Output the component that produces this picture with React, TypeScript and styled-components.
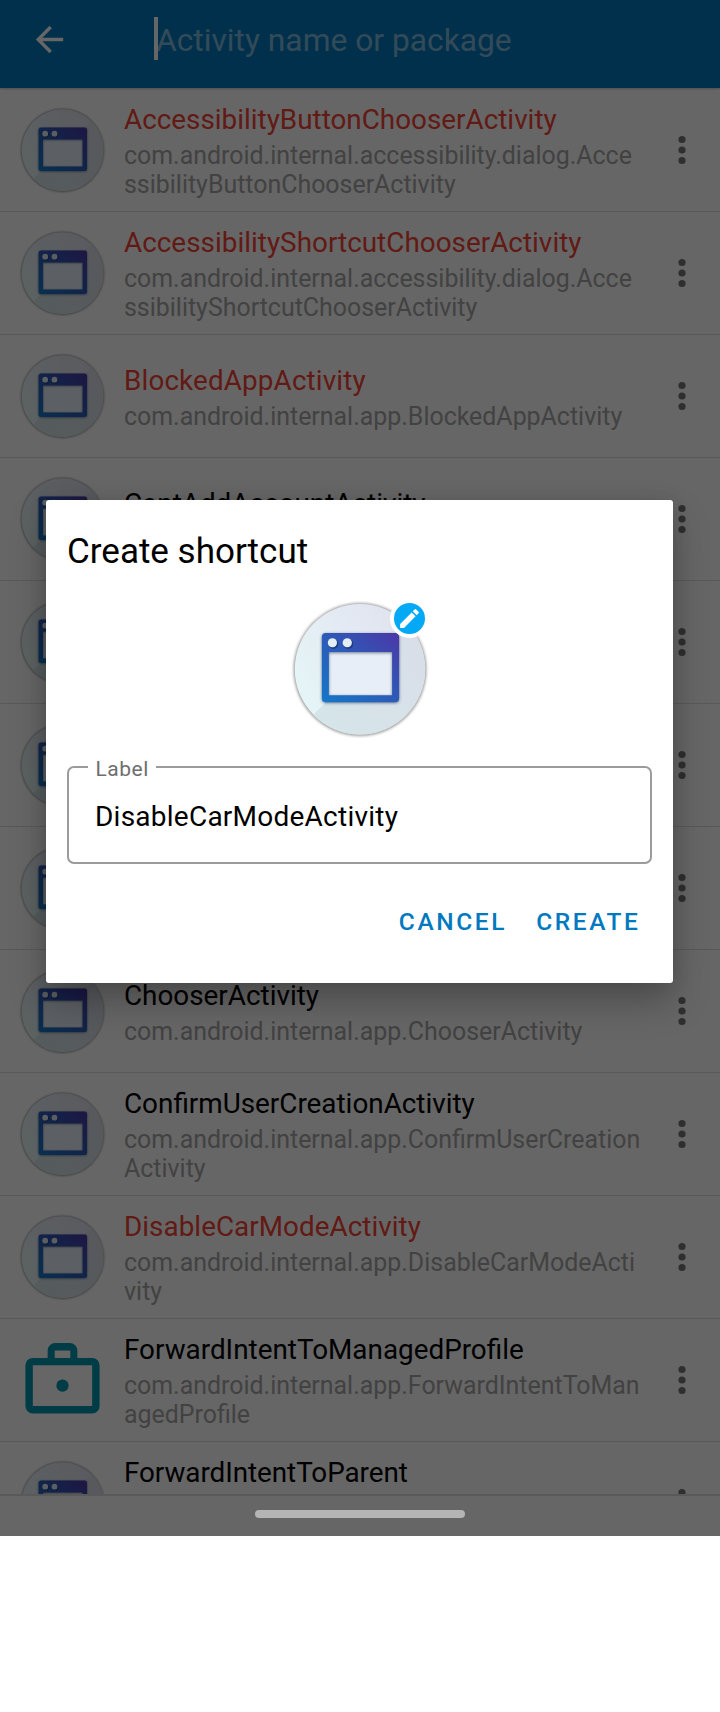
import React, { useId } from "react";
import styled, { createGlobalStyle } from "styled-components";

const GlobalStyle = createGlobalStyle`
  *, *::before, *::after { box-sizing: border-box; }
  body { margin: 0; background: #fff; font-family: Roboto, sans-serif; }
`;

const Screen = styled.div`
  position: relative;
  width: 720px;
  height: 1536px;
  display: flex;
  flex-direction: column;
  overflow: hidden;
  background: #fff;
`;

const SearchBar = styled.header`
  flex: none;
  height: 88px;
  padding: 0 29px 10px;
  display: flex;
  align-items: center;
  background: #0079bc;
  box-shadow: 0 1px 2px rgba(0, 0, 0, 0.25);
  z-index: 1;
`;

const BackIcon = styled.svg`
  flex: none;
  width: 41px;
  height: 41px;
  margin-right: 84px;
  fill: #fff;
`;

const Cursor = styled.span`
  flex: none;
  width: 4px;
  height: 43px;
  margin-right: -2px;
  margin-bottom: 1px;
  background: #fff;
`;

const Hint = styled.span`
  padding-top: 3px;
  font-size: 31.75px;
  line-height: 38px;
  color: rgba(255, 255, 255, 0.5);
  white-space: nowrap;
`;

const List = styled.ul`
  flex: 1;
  min-height: 0;
  margin: 0;
  padding: 1px 0 0;
  overflow: hidden;
  list-style: none;
`;

const Row = styled.li`
  display: flex;
  align-items: center;
  height: 123px;
  padding-left: 17.5px;
  border-bottom: 1px solid #dfdfdf;
`;

const RowText = styled.div`
  width: 520px;
  margin-left: 17.5px;
  padding-top: 2px;
`;

const Name = styled.div<{ $alert?: boolean; $tracking?: number }>`
  font-size: 27.85px;
  line-height: 33px;
  letter-spacing: ${(p) => (p.$tracking ? `${p.$tracking}px` : "normal")};
  white-space: nowrap;
  color: ${(p) => (p.$alert ? "#f44336" : "#000")};
`;

const Path = styled.div`
  margin-top: 5px;
  font-size: 24.93px;
  line-height: 29px;
  word-break: break-all;
  color: #a6a6a6;
`;

const MoreIcon = styled.svg`
  flex: none;
  width: 42px;
  height: 42px;
  margin-left: 17px;
  fill: #757575;
`;

const NavBar = styled.footer`
  flex: none;
  display: flex;
  justify-content: center;
  height: 42px;
  padding-top: 14px;
  border-top: 2px solid #dfdfdf;
  background: #fff;
`;

const HomePill = styled.span`
  position: relative;
  z-index: 3;
  width: 210px;
  height: 8px;
  border-radius: 4px;
  background: #b4b4b4;
`;

const Scrim = styled.div`
  position: absolute;
  inset: 0;
  z-index: 2;
  background: rgba(0, 0, 0, 0.6);
`;

const Dialog = styled.section`
  position: absolute;
  left: 46px;
  top: 500px;
  width: 627px;
  height: 483px;
  padding: 31px 21px 0;
  display: flex;
  flex-direction: column;
  border-radius: 3px;
  background: #fff;
  box-shadow: 0 18px 36px rgba(0, 0, 0, 0.26), 0 0 20px rgba(0, 0, 0, 0.08);
`;

const DialogTitle = styled.h1`
  margin: 0;
  font-size: 35px;
  font-weight: 400;
  line-height: 42px;
  color: #000;
`;

const IconPicker = styled.div`
  position: relative;
  align-self: center;
  height: 142px;
  margin-top: 25px;
`;

const EditBadge = styled.span`
  position: absolute;
  left: 101.5px;
  top: 0.5px;
  width: 39px;
  height: 39px;
  display: flex;
  align-items: center;
  justify-content: center;
  border: 4px solid #fff;
  border-radius: 50%;
  background: #03a9f4;
`;

const Field = styled.fieldset`
  height: 110px;
  margin: 14px 0 0;
  padding: 0 26px;
  border: 2px solid #9b9b9b;
  border-radius: 7px;
`;

const FieldLabel = styled.legend`
  margin-left: -7px;
  padding: 4px 7px 0 7.5px;
  font-size: 21px;
  line-height: 22px;
  letter-spacing: 0.5px;
  color: #6e6e6e;
`;

const FieldValue = styled.div`
  padding-top: 20px;
  font-size: 28px;
  line-height: 34px;
  letter-spacing: 0.24px;
  color: #000;
`;

const Actions = styled.div`
  display: flex;
  justify-content: flex-end;
  gap: 29px;
  padding-right: 11.5px;
  margin-top: 42px;
`;

const ActionButton = styled.button`
  margin: 0;
  padding: 0;
  border: 0;
  background: none;
  font: 500 24.5px/32px Roboto, sans-serif;
  letter-spacing: 2.6px;
  color: #0079bf;
`;

function WindowIcon({ size, top = -4.25 }: { size: number; top?: number }) {
  const id = useId().replace(/[^a-zA-Z0-9]/g, "");
  const frame =
    "M32 30H101a4 4 0 0 1 4 4V95a4 4 0 0 1-4 4H32a4 4 0 0 1-4-4V34a4 4 0 0 1 4-4ZM35 49V92H98V49Z";
  return (
    <svg width={size} height={size} viewBox={`-4.75 ${top} 141.5 141.5`} style={{ display: "block", flex: "none" }}>
      <defs>
        <linearGradient id={id + "a"} x1="0" y1="0.7" x2="0.9" y2="0.2">
          <stop offset="0" stopColor="#e5f6f6" />
          <stop offset="0.55" stopColor="#e4eaf3" />
          <stop offset="1" stopColor="#dfe3ee" />
        </linearGradient>
        <linearGradient id={id + "b"} x1="0" y1="1" x2="0.7" y2="0.2">
          <stop offset="0" stopColor="#d4e6e8" />
          <stop offset="1" stopColor="#d9dfe9" />
        </linearGradient>
        <linearGradient id={id + "c"} x1="0" y1="1" x2="1" y2="0">
          <stop offset="0" stopColor="#1478c8" />
          <stop offset="0.5" stopColor="#2d5ab8" />
          <stop offset="1" stopColor="#4b38a6" />
        </linearGradient>
        <clipPath id={id + "d"}>
          <circle cx="66" cy="66" r="65" />
        </clipPath>
        <filter id={id + "e"} x="-10%" y="-10%" width="120%" height="120%">
          <feGaussianBlur stdDeviation="1.6" />
        </filter>
      </defs>
      <circle cx="66" cy="66.3" r="66" fill="#000" opacity="0.42" filter={`url(#${id}e)`} />
      <circle cx="66" cy="66" r="65" fill={`url(#${id}a)`} />
      <path d="M19 112L114 17L140 17V140H19Z" fill={`url(#${id}b)`} clipPath={`url(#${id}d)`} />
      <path d="M34 48H99V93H34Z" fill="#e7eef7" />
      <path d={frame} fillRule="evenodd" fill="#1d3050" opacity="0.6" transform="translate(0 0.8)" filter={`url(#${id}e)`} />
      <path d={frame} fillRule="evenodd" fill={`url(#${id}c)`} />
      <circle cx="39.6" cy="41" r="4.9" fill="#14285a" opacity="0.55" />
      <circle cx="54.4" cy="41" r="4.9" fill="#14285a" opacity="0.55" />
      <circle cx="38.5" cy="39.7" r="4.6" fill="#e4edf4" />
      <circle cx="53.3" cy="39.7" r="4.6" fill="#e4edf4" />
    </svg>
  );
}

function WorkIcon() {
  return (
    <svg width="89" height="89" viewBox="0 0.1 24 24" fill="#0097b0" style={{ flex: "none" }}>
      <path
        d="M4 6H20a2 2 0 0 1 2 2V19a2 2 0 0 1-2 2H4a2 2 0 0 1-2-2V8a2 2 0 0 1 2-2ZM4 8V19H20V8Z"
        fillRule="evenodd"
      />
      <path
        d="M10 2H14a2 2 0 0 1 2 2V7H8V4a2 2 0 0 1 2-2ZM9.9 4V6.1H14.1V4Z"
        fillRule="evenodd"
      />
      <circle cx="12" cy="13.5" r="1.65" />
    </svg>
  );
}

type Entry = { name: string; path: string; alert?: boolean; work?: boolean; tracking?: number };

const entries: Entry[] = [
  { name: "AccessibilityButtonChooserActivity", path: "com.android.internal.accessibility.dialog.AccessibilityButtonChooserActivity", alert: true },
  { name: "AccessibilityShortcutChooserActivity", path: "com.android.internal.accessibility.dialog.AccessibilityShortcutChooserActivity", alert: true, tracking: 0.02 },
  { name: "BlockedAppActivity", path: "com.android.internal.app.BlockedAppActivity", alert: true, tracking: 0.13 },
  { name: "CantAddAccountActivity", path: "android.accounts.CantAddAccountActivity" },
  { name: "ChooseAccountActivity", path: "android.accounts.ChooseAccountActivity" },
  { name: "ChooseAccountTypeActivity", path: "android.accounts.ChooseAccountTypeActivity" },
  { name: "ChooseTypeAndAccountActivity", path: "android.accounts.ChooseTypeAndAccountActivity" },
  { name: "ChooserActivity", path: "com.android.internal.app.ChooserActivity" },
  { name: "ConfirmUserCreationActivity", path: "com.android.internal.app.ConfirmUserCreationActivity" },
  { name: "DisableCarModeActivity", path: "com.android.internal.app.DisableCarModeActivity", alert: true, tracking: 0.03 },
  { name: "ForwardIntentToManagedProfile", path: "com.android.internal.app.ForwardIntentToManagedProfile", work: true },
  { name: "ForwardIntentToParent", path: "com.android.internal.app.ForwardIntentToParent", tracking: -0.06 },
];

export default function App() {
  return (
    <>
      <GlobalStyle />
      <Screen>
        <SearchBar>
          <BackIcon viewBox="0 0 24 24">
            <path d="M20 11H7.83l5.59-5.59L12 4l-8 8 8 8 1.41-1.41L7.83 13H20v-2z" />
          </BackIcon>
          <Cursor />
          <Hint>Activity name or package</Hint>
        </SearchBar>
        <List>
          {entries.map((e) => (
            <Row key={e.name}>
              {e.work ? <WorkIcon /> : <WindowIcon size={89} />}
              <RowText>
                <Name $alert={e.alert} $tracking={e.tracking}>{e.name}</Name>
                <Path>{e.path}</Path>
              </RowText>
              <MoreIcon viewBox="0 0 42 42">
                <circle cx="21" cy="10.5" r="3.6" />
                <circle cx="21" cy="21" r="3.6" />
                <circle cx="21" cy="31.5" r="3.6" />
              </MoreIcon>
            </Row>
          ))}
        </List>
        <NavBar>
          <HomePill />
        </NavBar>
        <Scrim>
          <Dialog>
            <DialogTitle>Create shortcut</DialogTitle>
            <IconPicker>
              <WindowIcon size={142} top={-4.9} />
              <EditBadge>
                <svg width="25" height="25" viewBox="0 0 24 24" fill="#fff" style={{ flex: "none" }}>
                  <path d="M3 17.25V21h3.75L17.81 9.94l-3.75-3.75L3 17.25zM20.71 7.04c.39-.39.39-1.02 0-1.41l-2.34-2.34c-.39-.39-1.02-.39-1.41 0l-1.83 1.83 3.75 3.75 1.83-1.83z" />
                </svg>
              </EditBadge>
            </IconPicker>
            <Field>
              <FieldLabel>Label</FieldLabel>
              <FieldValue>DisableCarModeActivity</FieldValue>
            </Field>
            <Actions>
              <ActionButton>CANCEL</ActionButton>
              <ActionButton>CREATE</ActionButton>
            </Actions>
          </Dialog>
        </Scrim>
      </Screen>
    </>
  );
}
